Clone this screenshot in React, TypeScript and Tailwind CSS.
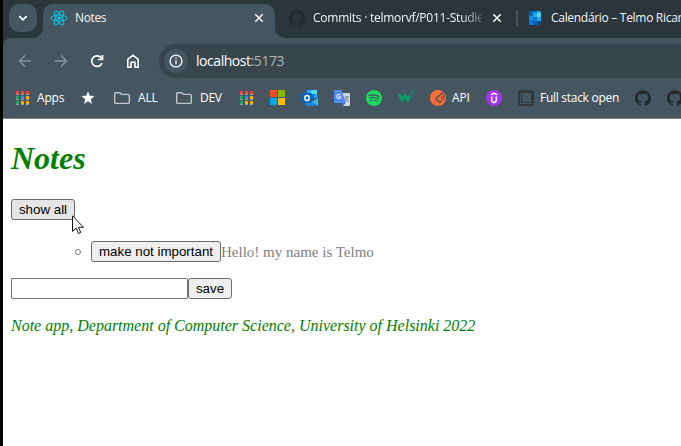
import type { ReactNode } from "react";
import { SiGithub, SiSpotify } from "react-icons/si";

const uiFont = "font-['Open_Sans','Noto_Sans',sans-serif]";

function ReactLogo() {
  return (
    <svg width="18" height="18" viewBox="-12 -12 24 24" fill="none" stroke="#00c8e8" strokeWidth="1.3">
      <circle r="2.1" fill="#00d8ff" stroke="none" />
      <ellipse rx="10.6" ry="4.1" />
      <ellipse rx="10.6" ry="4.1" transform="rotate(60)" />
      <ellipse rx="10.6" ry="4.1" transform="rotate(120)" />
    </svg>
  );
}

function Close() {
  return (
    <svg width="10" height="10" viewBox="0 0 10 10" stroke="#f1f3f4" strokeWidth="1.6">
      <path d="M1.3 1.3l7.4 7.4M8.7 1.3L1.3 8.7" />
    </svg>
  );
}

function CalendarIcon() {
  return (
    <svg width="14" height="14" viewBox="0 0 14 14" className="shrink-0">
      <clipPath id="calendar-corners">
        <rect x="1" width="12" height="14" rx="1.5" />
      </clipPath>
      <g clipPath="url(#calendar-corners)">
        <path d="M0 0h5v5H0z" fill="#0364b8" />
        <path d="M5 0h4v5H5z" fill="#0078d4" />
        <path d="M9 0h4v5H9z" fill="#28a8ea" />
        <path d="M0 5h5v4H0z" fill="#1490df" />
        <path d="M5 2h4v4H5z" fill="#28a8ea" />
        <path d="M9 2h4v4H9z" fill="#50d9ff" />
        <path d="M5 6h4v4H5z" fill="#0078d4" />
        <path d="M9 6h4v4H9z" fill="#28a8ea" />
        <path d="M0 9h5v5H0z" fill="#0a7adb" />
        <path d="M5 10h4v4H5z" fill="#0364b8" />
        <path d="M9 10h4v4H9z" fill="#14447d" />
      </g>
    </svg>
  );
}

function AppsGrid() {
  const colors = ["#f4433c", "#f4433c", "#f4433c", "#27a45a", "#2196f3", "#f9ab00", "#27a45a", "#f9ab00", "#f9ab00"];
  return (
    <svg width="16" height="16" viewBox="0 0 16 16" shapeRendering="crispEdges">
      {colors.map((c, i) => {
        const x = 2 + (i % 3) * 5;
        const y = 1 + Math.floor(i / 3) * 5;
        return (
          <g key={i}>
            <rect x={x} y={y} width="3" height="3" fill={c} />
            <rect x={x} y={y + 3} width="3" height="1" fill="#94a1a9" />
          </g>
        );
      })}
    </svg>
  );
}

function Star() {
  return (
    <svg width="16" height="16" viewBox="0 0 16 16" fill="#fff">
      <path d="M8 1.3l1.700 4.500 4.900.3-3.800 3.100 1.300 4.800L8 11.300 3.900 14l1.300-4.800L1.400 6.100l4.900-.3z" />
    </svg>
  );
}

function Folder() {
  return (
    <svg width="16" height="16" viewBox="0 0 16 16" fill="none" stroke="#c1c4c6" strokeWidth="1.4" strokeLinejoin="round">
      <path d="M1.700 2.700h4.300l1.600 1.700h6.700q1 0 1 1v7q0 1-1 1H1.700q-1 0-1-1V3.700q0-1 1-1z" />
    </svg>
  );
}

function Microsoft() {
  return (
    <svg width="16" height="16" viewBox="0 0 16 16" shapeRendering="crispEdges">
      <path d="M0 0h7v7H0z" fill="#f25022" />
      <path d="M8 0h7v7H8z" fill="#7fba00" />
      <path d="M0 8h7v7H0z" fill="#00a4ef" />
      <path d="M8 8h7v7H8z" fill="#ffb900" />
    </svg>
  );
}

function Outlook() {
  return (
    <svg width="16" height="16" viewBox="0 0 16 16">
      <path d="M4 0h11v9H4z" fill="#0a65b5" />
      <path d="M9 0h6v4H9z" fill="#50d9ff" />
      <path d="M5 0h4v4H5z" fill="#28a8ea" />
      <path d="M9 4h3.500v4H9z" fill="#0078d4" />
      <path d="M12.500 4H15v4h-2.500z" fill="#28a8ea" />
      <path d="M3 9l6.500 3L16 8v6.500q0 1-1 1H4q-1 0-1-1z" fill="#35b8f1" />
      <path d="M3 9l13 6.300q-.4.500-1 .5H4q-1 0-1-1z" fill="#1784d9" />
      <rect y="3" width="10" height="10" rx="1" fill="#0364b8" />
      <ellipse cx="5" cy="8" rx="2.200" ry="2.500" fill="none" stroke="#fff" strokeWidth="1.400" />
    </svg>
  );
}

function Translate() {
  return (
    <svg width="16" height="16" viewBox="0 0 16 16">
      <path d="M5 3h10q1 0 1 1v11q0 1-1 1H9z" fill="#d4d8dc" />
      <path d="M8 13h3.500L9 16z" fill="#3367d6" />
      <path d="M1 0h6.500L12 13H1q-1 0-1-1V1q0-1 1-1z" fill="#4f8cf1" />
      <path d="M6.400 5A2.100 2.100 0 1 0 6.600 7.500V6.700H4.700" fill="none" stroke="#e5edfc" strokeWidth="1.100" />
      <path d="M10.500 7H15M12.600 6v1M14 7.300q-.7 2.900-3 4.200M11.300 8q1 2.500 3.200 4" fill="none" stroke="#76838e" />
    </svg>
  );
}

function W3() {
  return (
    <svg width="16" height="16" viewBox="0 0 16 16" fill="none" stroke="#04a16c">
      <path d="M1 4.200l3.200 6 2.600-4.500 3.200 4.500 2.200-5" strokeWidth="2.600" />
      <path d="M13 .900h2L14 2.300q1.300-.1 1.200 1.100-.2 1.100-2 .8" strokeWidth=".8" />
    </svg>
  );
}

function Postman() {
  return (
    <svg width="16" height="16" viewBox="0 0 16 16">
      <circle cx="8" cy="8" r="8" fill="#ff6c37" />
      <path d="M13 2.500L6 8.500l4.500 4.200" fill="none" stroke="#455660" strokeWidth="1.500" />
      <path d="M13.300 4.300q1.600 3-.3 5.200l-2.500 2.700M11.500 6.500v2" fill="none" stroke="#455660" strokeWidth="1.100" />
    </svg>
  );
}

function Udemy() {
  return (
    <svg width="16" height="16" viewBox="0 0 16 16">
      <circle cx="8" cy="8" r="8" fill="#a435f0" />
      <path d="M5 4.900L8 3.200l3 1.700M5.700 6.500v3.600q0 2.400 2.300 2.400t2.300-2.400V6.500" fill="none" stroke="#fff" strokeWidth="1.500" />
    </svg>
  );
}

function FullStack() {
  return (
    <svg width="16" height="16" viewBox="0 0 16 16" fill="none" stroke="#30393e">
      <rect x="1" y="1" width="14" height="14" rx="1" strokeWidth="2" />
      <rect x="3.500" y="2.500" width="10" height="10" strokeWidth="1" />
    </svg>
  );
}

type Bookmark = { icon: ReactNode; width: string; label?: string; text?: string };

const bookmarks: Bookmark[] = [
  { icon: <AppsGrid />, width: "w-[66px]", label: "Apps", text: "ml-[7px] tracking-[-0.2px]" },
  { icon: <Star />, width: "w-[34px]" },
  { icon: <Folder />, width: "w-[62px]", label: "ALL", text: "ml-[8px] tracking-[-0.2px]" },
  { icon: <Folder />, width: "w-[62px]", label: "DEV", text: "ml-[8px] tracking-[-0.3px]" },
  { icon: <AppsGrid />, width: "w-8" },
  { icon: <Microsoft />, width: "w-8" },
  { icon: <Outlook />, width: "w-8" },
  { icon: <Translate />, width: "w-8" },
  { icon: <SiSpotify size={16} color="#1ed760" />, width: "w-8" },
  { icon: <W3 />, width: "w-8" },
  { icon: <Postman />, width: "w-14", label: "API", text: "ml-[6px] tracking-[-0.2px]" },
  { icon: <Udemy />, width: "w-8" },
  { icon: <FullStack />, width: "w-[117px]", label: "Full stack open", text: "ml-[6px] tracking-[-0.28px]" },
  { icon: <SiGithub size={16} color="#24292e" />, width: "w-8" },
  { icon: <SiGithub size={16} color="#24292e" />, width: "w-8" },
];

function TabStrip() {
  return (
    <div className="flex h-[38px] bg-[#455660] text-[12px] text-[#f1f3f4]">
      <div className="flex w-10 shrink-0 rounded-br-[10px] bg-[#2b363c] pt-1 pl-[6px]">
        <button className="flex h-7 w-7 items-center justify-center rounded-[10px] bg-[#455660]">
          <svg width="10" height="10" viewBox="0 0 10 10" fill="none" stroke="#fff" strokeWidth="1.800">
            <path d="M1.300 3.200L5 6.800l3.700-3.600" />
          </svg>
        </button>
      </div>
      <div className="h-7 w-[232px] shrink-0 bg-[#2b363c] pt-1">
        <div className="flex h-7 items-center rounded-t-[10px] bg-[#455660] pr-[11px] pl-[7px]">
          <ReactLogo />
          <span className="ml-[7px] grow tracking-[-0.35px]">Notes</span>
          <Close />
        </div>
      </div>
      <div className="flex min-w-0 grow items-center overflow-hidden rounded-bl-[10px] bg-[#2b363c] pb-[2px] pl-[14px] whitespace-nowrap">
        <SiGithub size={16} color="#22292e" className="shrink-0" />
        <span className="ml-[8px] w-[168px] shrink-0 overflow-hidden tracking-[-0.25px] [mask-image:linear-gradient(to_right,black_88%,rgba(0,0,0,0.3))]">
          Commits · telmorvf/P011-Studie
        </span>
        <span className="ml-[11px] shrink-0"><Close /></span>
        <span className="ml-[14px] h-4 w-[2px] shrink-0 bg-[#455660]" />
        <span className="ml-[10px] flex shrink-0"><CalendarIcon /></span>
        <span className="ml-[9px] tracking-[-0.3px]">Calendário – Telmo Ricar</span>
      </div>
    </div>
  );
}

function Toolbar() {
  return (
    <div className="flex h-[46px] items-center pl-[15px] text-[14px]">
      <svg width="14" height="14" viewBox="0 0 14 14" fill="none" stroke="#87939a" strokeWidth="1.600">
        <path d="M13 7H2M7 1.500L1.500 7 7 12.500" />
      </svg>
      <svg className="ml-[22px]" width="14" height="14" viewBox="0 0 14 14" fill="none" stroke="#87939a" strokeWidth="1.600">
        <path d="M1 7h11M7 1.500L12.500 7 7 12.500" />
      </svg>
      <svg className="ml-[22px]" width="14" height="14" viewBox="0 0 14 14" fill="none" stroke="#fff" strokeWidth="1.700">
        <path d="M12 9A5.300 5.300 0 1 1 11.500 4.300M12.500 1v4.500H8" />
      </svg>
      <svg className="ml-[22px]" width="14" height="14" viewBox="0 0 14 14" fill="none" stroke="#fff" strokeWidth="1.600">
        <path d="M1.800 5.300L7 1.200l5.200 4.100v7.900H9V8.200H5v5H1.800z" />
      </svg>
      <div className="ml-[19px] flex h-[34px] grow items-center rounded-l-full bg-[#38454c] pl-[5px]">
        <div className="flex h-6 w-6 items-center justify-center rounded-full bg-[#455660]">
          <svg width="14" height="14" viewBox="0 0 14 14" fill="none" stroke="#f1f3f4" strokeWidth="1.400">
            <circle cx="7" cy="7" r="5.900" />
            <path d="M7 6.300v4M7 3.500v1.500" />
          </svg>
        </div>
        <span className="ml-[8px] pb-[2px] tracking-[-0.45px] text-white">localhost<span className="text-[#aeb5b9]">:5173</span></span>
      </div>
    </div>
  );
}

function BookmarksBar() {
  return (
    <div className="flex h-[34px] items-center overflow-hidden pb-[6px] pl-[11px] text-[12px] text-white">
      {bookmarks.map((b, i) => (
        <div key={i} className={`flex h-4 shrink-0 items-center whitespace-nowrap ${b.width}`}>
          <span className="flex w-4 shrink-0">{b.icon}</span>
          {b.label && <span className={b.text}>{b.label}</span>}
        </div>
      ))}
    </div>
  );
}

const buttonStyle =
  "h-[21px] shrink-0 rounded-[3px] border border-[#6b6b6b] text-center font-['Liberation_Sans',Arial,sans-serif] text-[13.333px] leading-[19px] text-black";

export default function App() {
  return (
    <div className="relative flex h-[446px] w-[681px] flex-col overflow-hidden border-l-[3px] border-black bg-white">
      <header className={`${uiFont} h-[119px] shrink-0 border-b border-[#77838f] bg-[#2b363c]`}>
        <TabStrip />
        <div className="rounded-tl-[8px] bg-[#455660]">
          <Toolbar />
          <BookmarksBar />
        </div>
      </header>
      <main className="flex flex-col items-start px-2 pt-[21px] font-['Liberation_Serif','Times_New_Roman',serif] text-[16px] leading-[18px]">
        <h1 className="h-[59px] text-[32px] leading-[37px] font-bold text-[#008000] italic">Notes</h1>
        <button className={`${buttonStyle} w-16 bg-[#e5e5e5]`}>show all</button>
        <ul className="mt-[21px] pl-[80px]">
          <li className="flex h-[21px] items-center text-[15px] text-[#808080]">
            <span className="-ml-[16px] mr-[10px] h-[6px] w-[6px] rounded-full border border-[#808080]" />
            <button className={`${buttonStyle} w-[130px] bg-[#efefef]`}>make not important</button>
            <span>Hello! my name is Telmo</span>
          </li>
        </ul>
        <form className="mt-4 flex" onSubmit={(e) => e.preventDefault()}>
          <input className="h-[21px] w-[177px] rounded-[1px] border border-[#767676] bg-white" />
          <button className={`${buttonStyle} w-11 bg-[#efefef]`}>save</button>
        </form>
        <footer className="mt-[18px] text-[#008000] italic">
          Note app, Department of Computer Science, University of Helsinki 2022
        </footer>
      </main>
      <svg className="absolute top-[215px] left-[69px]" width="13" height="20" viewBox="0 0 13 20" fill="#fff" stroke="#15151f">
        <path d="M.5.800v15.700l3.700-3.400 2.300 5.400 2.300-1-2.300-5.200h5z" />
      </svg>
    </div>
  );
}
